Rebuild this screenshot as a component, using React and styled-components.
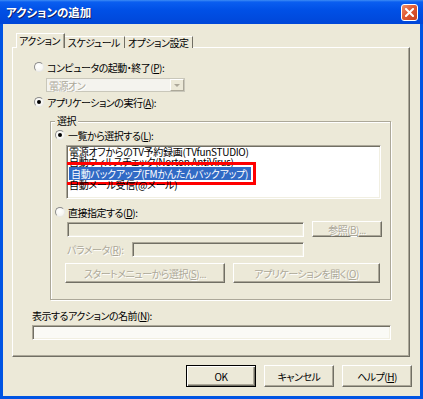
import styled, { createGlobalStyle } from "styled-components";

const GlobalStyle = createGlobalStyle`
  html, body {
    margin: 0;
    padding: 0;
    background: #ffffff;
  }
  body {
    font-family: "Noto Sans CJK JP", "Noto Sans", sans-serif;
    font-feature-settings: "palt" 1;
  }
`;

const Window = styled.div`
  width: 423px;
  height: 399px;
  display: flex;
  flex-direction: column;
  background: #0054e3;
  overflow: hidden;
`;

const TitleBar = styled.div`
  height: 24px;
  flex: none;
  display: flex;
  align-items: center;
  justify-content: space-between;
  padding: 0 5px 0 6px;
  background: linear-gradient(
    to bottom,
    #3d8cf5 0px,
    #0a5ef0 2px,
    #0050e6 10px,
    #0049dc 20px,
    #0047d8 24px
  );
`;

const Title = styled.span`
  color: #ffffff;
  font-size: 11.5px;
  font-weight: bold;
  text-shadow: 1px 1px 0 #0a1e6a;
`;

const CloseButton = styled.div`
  width: 17px;
  height: 17px;
  box-sizing: border-box;
  border: 1px solid #ffffff;
  border-radius: 3px;
  background: linear-gradient(135deg, #f0906a 0%, #e05a33 45%, #c8401c 100%);
  display: flex;
  align-items: center;
  justify-content: center;
`;

const Frame = styled.div`
  flex: 1;
  margin: 0 3px 3px 3px;
  background: #ece9d8;
  display: flex;
  flex-direction: column;
  align-items: flex-start;
  padding: 9px 8px 0 9px;
  box-sizing: border-box;
  font-size: 10px;
  letter-spacing: -0.5px;
`;

const TabRow = styled.div`
  display: flex;
  align-items: flex-end;
  height: 15px;
  margin: 0 0 -1px 4px;
  position: relative;
  z-index: 1;
`;

const Tab = styled.div`
  box-sizing: border-box;
  height: ${(p) => (p.active ? 15 : 12)}px;
  background: #ece9d8;
  border-top: 1px solid #ffffff;
  border-left: ${(p) => (p.active ? "1px solid #ffffff" : "none")};
  border-right: 1px solid #716f64;
  box-shadow: ${(p) => (p.active ? "inset -1px 0 0 #aca899" : "none")};
  line-height: ${(p) => (p.active ? 14 : 11)}px;
  color: #000000;
  padding: 0 4px 0 ${(p) => (p.active ? 2 : 3)}px;
  white-space: nowrap;
`;

const Panel = styled.div`
  width: 398px;
  height: 310px;
  box-sizing: border-box;
  border-top: 1px solid #ffffff;
  border-left: 1px solid #ffffff;
  border-right: 1px solid #716f64;
  border-bottom: 1px solid #716f64;
  box-shadow: inset -1px -1px 0 #aca899;
  display: flex;
  flex-direction: column;
  align-items: flex-start;
`;

const RadioRow = styled.div`
  display: flex;
  align-items: center;
  gap: 2px;
  height: 14px;
  margin: ${(p) => p.m};
  color: #000000;
  white-space: nowrap;
`;

const RadioDot = styled.span`
  width: 10px;
  height: 10px;
  flex: none;
  box-sizing: border-box;
  border-radius: 50%;
  border: 1px solid;
  border-color: #8c8c8c #e8e8e8 #e8e8e8 #8c8c8c;
  background: radial-gradient(circle at 40% 40%, #ffffff 0%, #f2f1ea 100%);
  display: flex;
  align-items: center;
  justify-content: center;
  margin-right: 1px;

  &::after {
    content: "";
    width: 4px;
    height: 4px;
    border-radius: 50%;
    background: ${(p) => (p.checked ? "#000000" : "transparent")};
  }
`;

const Key = styled.span`
  text-decoration: underline;
`;

const Select = styled.div`
  width: 139px;
  height: 14px;
  margin: 4px 0 0 33px;
  box-sizing: border-box;
  border: 1px solid #c9c7ba;
  background: #f4f3ee;
  display: flex;
  align-items: center;
  justify-content: space-between;
  color: #aca899;
  text-shadow: 1px 1px 0 #ffffff;
  padding-left: 2px;
`;

const SelectArrow = styled.span`
  width: 14px;
  height: 12px;
  box-sizing: border-box;
  border: 1px solid;
  border-color: #ffffff #aca899 #aca899 #ffffff;
  background: #ece9d8;
  display: flex;
  align-items: center;
  justify-content: center;

  &::after {
    content: "";
    border-left: 3px solid transparent;
    border-right: 3px solid transparent;
    border-top: 3px solid #aca899;
  }
`;

const Group = styled.div`
  position: relative;
  width: 341px;
  height: 179px;
  margin: 12px 0 0 37px;
  box-sizing: border-box;
  border: 1px solid #aca899;
  box-shadow: inset 1px 1px 0 #ffffff, 1px 1px 0 #ffffff;
  display: flex;
  flex-direction: column;
  align-items: flex-start;
`;

const Legend = styled.span`
  position: absolute;
  top: -7px;
  left: 4px;
  padding: 0 2px;
  background: #ece9d8;
  line-height: 12px;
  color: #000000;
`;

const ListBox = styled.div`
  width: 315px;
  height: 54px;
  margin: 3px 0 0 15px;
  box-sizing: border-box;
  border: 1px solid;
  border-color: #aca899 #ffffff #ffffff #aca899;
  box-shadow: inset 1px 1px 0 #716f64, inset -1px -1px 0 #f1efe2;
  background: #ffffff;
  padding: 1px 0 0 2px;
  overflow: hidden;
  letter-spacing: -0.3px;
`;

const ListItem = styled.div`
  height: ${(p) => (p.selected ? 13 : 10)}px;
  line-height: ${(p) => (p.selected ? 13 : 10)}px;
  white-space: nowrap;
  color: #000000;
`;

const Selected = styled.span`
  display: inline-block;
  background: #316ac5;
  color: #ffffff;
  padding: 0 3px 0 2px;
  outline: 3px solid #ff0000;
  outline-offset: 2px;
`;

const Row = styled.div`
  display: flex;
  align-items: center;
  margin: ${(p) => p.m};
`;

const Field = styled.div`
  width: ${(p) => p.w}px;
  height: 15px;
  box-sizing: border-box;
  border: 1px solid;
  border-color: #aca899 #ffffff #ffffff #aca899;
  box-shadow: inset 1px 1px 0 #716f64, inset -1px -1px 0 #f1efe2;
  background: ${(p) => (p.enabled ? "#fafaf6" : "#ece9d8")};
`;

const Label = styled.span`
  width: ${(p) => (p.w ? `${p.w}px` : "auto")};
  line-height: 14px;
  white-space: nowrap;
  color: ${(p) => (p.disabled ? "#aca899" : "#000000")};
  text-shadow: ${(p) => (p.disabled ? "1px 1px 0 #ffffff" : "none")};
  margin: ${(p) => p.m || 0};
`;

const Button = styled.div`
  width: ${(p) => p.w}px;
  height: ${(p) => p.h || 20}px;
  box-sizing: border-box;
  margin-left: ${(p) => p.ml || 0}px;
  background: #ece9d8;
  border: 1px solid;
  border-color: ${(p) =>
    p.primary ? "#000000" : "#ffffff #716f64 #716f64 #ffffff"};
  box-shadow: ${(p) =>
    p.primary
      ? "inset 1px 1px 0 #ffffff, inset -1px -1px 0 #716f64, inset -2px -2px 0 #aca899"
      : "inset -1px -1px 0 #aca899"};
  display: flex;
  align-items: center;
  justify-content: center;
  white-space: nowrap;
  color: ${(p) => (p.disabled ? "#aca899" : "#000000")};
  text-shadow: ${(p) => (p.disabled ? "1px 1px 0 #ffffff" : "none")};
`;

const Footer = styled.div`
  display: flex;
  align-self: flex-end;
  gap: 8px;
  margin-top: 8px;
`;

const listItems = [
  "電源オフからのTV予約録画(TVfunSTUDIO)",
  "自動ウィルスチェック(Norton AntiVirus)",
  "自動バックアップ(FMかんたんバックアップ)",
  "自動メール受信(@メール)",
];

export default function App() {
  return (
    <>
      <GlobalStyle />
      <Window>
        <TitleBar>
          <Title>アクションの追加</Title>
          <CloseButton>
            <svg width="9" height="9" viewBox="0 0 9 9">
              <path
                d="M1 1 L8 8 M8 1 L1 8"
                stroke="#ffffff"
                strokeWidth="2"
                strokeLinecap="square"
              />
            </svg>
          </CloseButton>
        </TitleBar>

        <Frame>
          <TabRow>
            <Tab active>アクション</Tab>
            <Tab>スケジュール</Tab>
            <Tab>オプション設定</Tab>
          </TabRow>

          <Panel>
            <RadioRow m="12px 0 0 21px">
              <RadioDot />
              <span>
                コンピュータの起動・終了(<Key>P</Key>):
              </span>
            </RadioRow>
            <Select>
              <span>電源オン</span>
              <SelectArrow />
            </Select>
            <RadioRow m="3px 0 0 21px">
              <RadioDot checked />
              <span>
                アプリケーションの実行(<Key>A</Key>):
              </span>
            </RadioRow>

            <Group>
              <Legend>選択</Legend>
              <RadioRow m="6px 0 0 4px">
                <RadioDot checked />
                <span>
                  一覧から選択する(<Key>L</Key>):
                </span>
              </RadioRow>
              <ListBox>
                {listItems.map((item, i) => (
                  <ListItem key={item} selected={i === 2}>
                    {i === 2 ? <Selected>{item}</Selected> : item}
                  </ListItem>
                ))}
              </ListBox>
              <RadioRow m="6px 0 0 4px">
                <RadioDot />
                <span>
                  直接指定する(<Key>D</Key>):
                </span>
              </RadioRow>
              <Row m="2px 0 0 16px">
                <Field w={237} />
                <Button disabled w={70} h={16} ml={8}>
                  参照(<Key>B</Key>)...
                </Button>
              </Row>
              <Row m="5px 0 0 16px">
                <Label disabled w={65}>
                  パラメータ(<Key>R</Key>):
                </Label>
                <Field w={172} />
              </Row>
              <Row m="6px 0 0 14px">
                <Button disabled w={160}>
                  スタートメニューから選択(<Key>S</Key>)...
                </Button>
                <Button disabled w={147} ml={8}>
                  アプリケーションを開く(<Key>O</Key>)
                </Button>
              </Row>
            </Group>

            <Label m="9px 0 0 19px">
              表示するアクションの名前(<Key>N</Key>):
            </Label>
            <Row m="2px 0 0 19px">
              <Field enabled w={359} />
            </Row>
          </Panel>

          <Footer>
            <Button primary w={70} h={22}>
              OK
            </Button>
            <Button w={70} h={22}>
              キャンセル
            </Button>
            <Button w={70} h={22}>
              ヘルプ(<Key>H</Key>)
            </Button>
          </Footer>
        </Frame>
      </Window>
    </>
  );
}
